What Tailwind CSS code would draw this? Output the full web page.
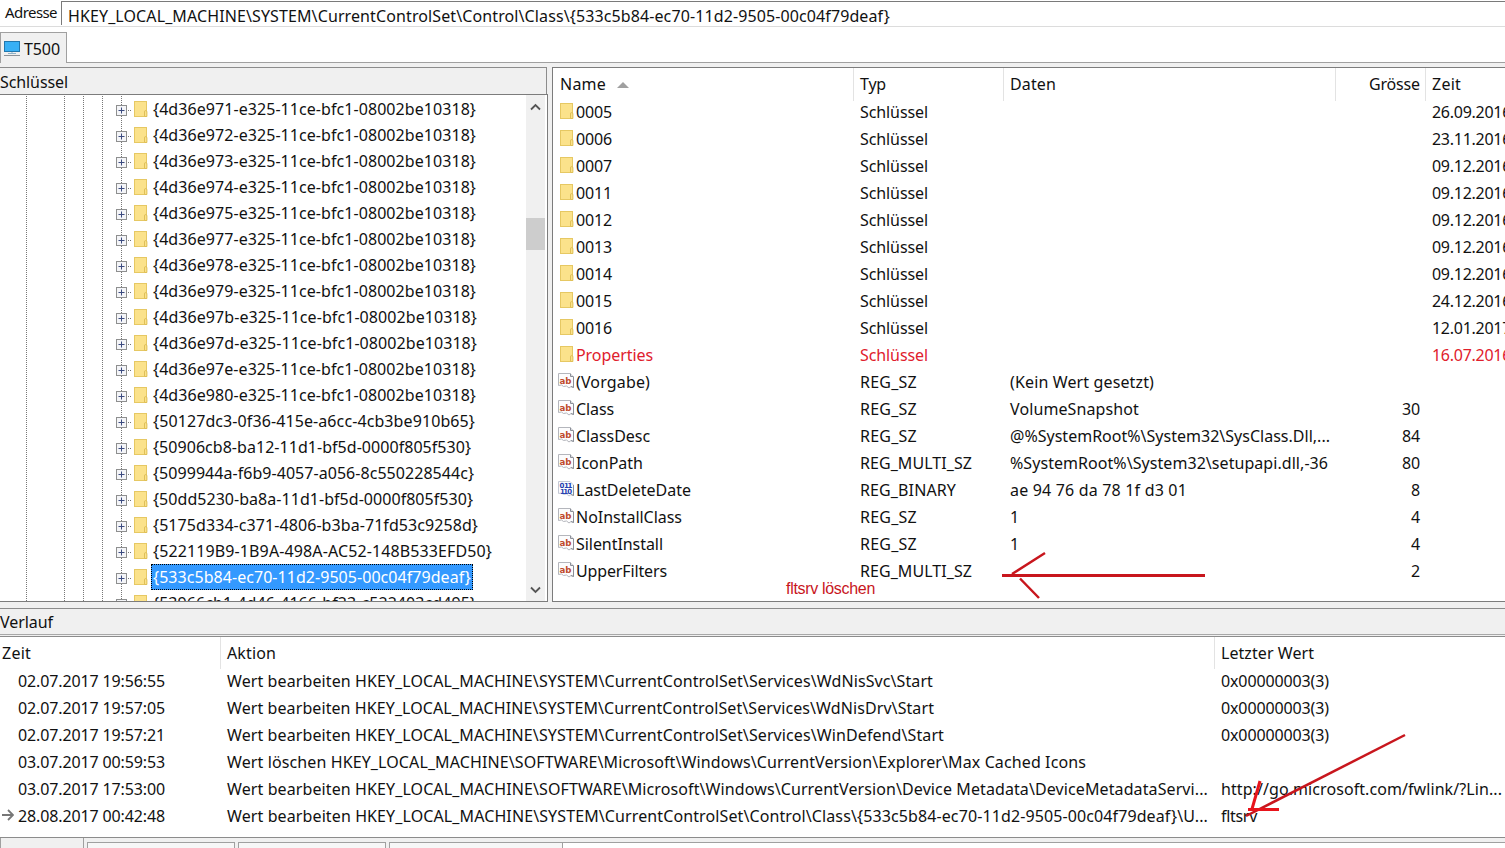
<!DOCTYPE html>
<html lang="de">
<head>
    <meta charset="UTF-8">
    <meta name="viewport" content="width=device-width, initial-scale=1.0">
    <title>Registry Editor</title>
    <script src="https://cdn.jsdelivr.net/npm/@tailwindcss/browser@4"></script>
</head>
<body class="relative flex h-[848px] w-[1505px] flex-col overflow-hidden bg-white font-['Noto_Sans',sans-serif] text-base leading-[26px] whitespace-nowrap text-[#111]">

    <!-- icons -->
    <svg class="hidden">
        <symbol id="folder" viewBox="0 0 14 18">
            <rect x="0.5" y="1.5" width="12" height="15" fill="#fbe28b" stroke="#e6c863"/>
            <path d="M10.5 16.5v-4.5q0-1.5 1.2-1.5t1.2 1.5v4.5z" fill="#fbe28b" stroke="#dfbf58"/>
        </symbol>
        <symbol id="string" viewBox="0 0 16 16">
            <path d="M0.5 0.5h11.500l3.500 3.500v10.500l-2.500-1-2 1.500-2.500-2-3 .500-2-1.500-3 .500z" fill="#fcfcfd" stroke="#b4b6bc"/>
            <path d="M12.500 0.500v3h3" fill="none" stroke="#8b8f98"/>
            <path d="M15.500 4v10.500l-2.500-1" fill="none" stroke="#8b8f98"/>
            <text x="1.500" y="11" textLength="12" lengthAdjust="spacingAndGlyphs" font-family="DejaVu Sans, sans-serif" font-size="9.500" font-weight="700" fill="#bf4a2c">ab</text>
        </symbol>
        <symbol id="binary" viewBox="0 0 16 16">
            <path d="M0.5 0.5h11.500l3.500 3.500v10.500l-2.500-1-2 1.500-2.500-2-3 .500-2-1.500-3 .500z" fill="#fcfcfd" stroke="#c4c8d4"/>
            <path d="M15.500 4v10.500l-2.500-1" fill="none" stroke="#8b8f98"/>
            <g font-family="DejaVu Sans, sans-serif" font-size="7" font-weight="700" fill="#2540b0">
                <text x="1.500" y="7.300">0</text>
                <text x="6" y="7.300">1</text>
                <text x="9.500" y="7.300">1</text>
                <text x="2" y="13.300">1</text>
                <text x="5.300" y="13.300">1</text>
                <text x="9.300" y="13.300">0</text>
            </g>
        </symbol>
    </svg>

    <!-- address bar -->
    <div class="flex h-[27px] shrink-0 border-b border-[#dcdcdc]">
        <div class="w-[61px] pl-[5px] text-[15px] leading-[25px]"><span data-w="52" data-size="15">Adresse</span></div>
        <div class="mt-px h-6 flex-1 border-t border-l border-[#7a7a7a] pt-px pl-1.5"><span data-w="822">HKEY_LOCAL_MACHINE\SYSTEM\CurrentControlSet\Control\Class\{533c5b84-ec70-11d2-9505-00c04f79deaf}</span></div>
    </div>

    <!-- computer tab -->
    <div class="flex h-9 shrink-0 pt-[5px]">
        <div class="flex w-[67px] items-center border-t border-r border-l border-[#a0a0a0] bg-[#f0f0f0] pl-[3px]">
            <svg class="mt-px mr-1 h-4 w-4" viewBox="0 0 16 16">
                <rect x="0.500" y="0.500" width="15" height="10" fill="#38b0f5" stroke="#2277ad"/>
                <path d="M8 11v1.500M4 12.500h8" stroke="#8fb2c8"/>
                <path d="M0 14.500h16" stroke="#8c9298"/>
            </svg>
            <span class="pt-0.5" data-w="36">T500</span>
        </div>
        <div class="flex-1 border-b border-[#a0a0a0]"></div>
    </div>

    <!-- tree + value list -->
    <div class="flex h-[546px] shrink-0 bg-[#f0f0f0] pt-1">
        <div class="flex w-[548px] flex-col">
            <div class="h-[27px] w-[547px] border-t border-r border-[#8c8c8c] pt-px"><span data-w="68">Schlüssel</span></div>
            <div class="flex h-[508px] border-t border-r border-b border-[#7c7c7c] bg-white">
                <div class="relative flex-1 overflow-hidden pt-px">
                    <svg class="absolute top-0 left-0 h-[506px] w-[130px]" fill="none" stroke="#777" stroke-dasharray="1 1">
                        <path d="M26.500 1v505M64.500 1v505M83.500 1v505M102.500 1v505M121.500 1v505"/>
                    </svg>
                    <div id="tree" class="relative"></div>
                </div>
                <div class="mr-[2px] flex w-[19px] flex-col bg-[#f0f0f0]">
                    <svg class="mt-2 ml-1 h-2 w-3" viewBox="0 0 12 8" fill="none" stroke="#555" stroke-width="1.800"><path d="M1 6.500l4.500-4.500 4.500 4.500"/></svg>
                    <div class="mt-[107px] h-8 w-[19px] bg-[#cdcdcd]"></div>
                    <svg class="mt-auto mb-[7px] ml-1 h-2 w-3" viewBox="0 0 12 8" fill="none" stroke="#555" stroke-width="1.800"><path d="M1 1.500l4.500 4.500 4.500-4.500"/></svg>
                </div>
            </div>
        </div>
        <div class="ml-1 h-[535px] flex-1 overflow-hidden border-t border-b border-l border-[#7c7c7c] bg-white">
            <div class="grid h-[31px] grid-cols-[301px_150px_332px_90px_200px] leading-[33px]">
                <div class="flex items-center border-r border-[#e3e3e3] pl-[7px]"><span data-w="46">Name</span>
                    <svg class="ml-[11px] h-1.5 w-3" viewBox="0 0 12 6"><path d="M0 6l6-6 6 6z" fill="#a0a0a0"/></svg>
                </div>
                <div class="border-r border-[#e3e3e3] pl-1.5"><span data-w="26">Typ</span></div>
                <div class="border-r border-[#e3e3e3] pl-1.5"><span data-w="46">Daten</span></div>
                <div class="border-r border-[#e3e3e3] pr-[5px] text-right"><span data-w="51">Grösse</span></div>
                <div class="pl-1.5"><span data-w="29">Zeit</span></div>
            </div>
            <div id="values"></div>
        </div>
    </div>

    <!-- history -->
    <div class="-mt-px h-[29px] shrink-0 border-t border-b border-[#8c8c8c] bg-[#f0f0f0]">
        <div class="h-[26px] border-b border-[#a8a8a8]"><span data-w="53">Verlauf</span></div>
    </div>
    <div class="h-[200px] shrink-0">
        <div class="grid h-[31px] grid-cols-[221px_994px_290px] leading-[32px]">
            <div class="border-r border-[#e3e3e3] pl-0.5"><span data-w="29">Zeit</span></div>
            <div class="border-r border-[#e3e3e3] pl-1.5"><span data-w="49">Aktion</span></div>
            <div class="pl-1.5"><span data-w="93">Letzter Wert</span></div>
        </div>
        <div id="history"></div>
    </div>

    <!-- bottom tabs -->
    <div class="flex h-[11px] shrink-0 border-t border-[#8c8c8c] bg-[#f0f0f0]">
        <div class="w-[84px] border-r border-l border-[#a0a0a0]"></div>
        <div class="mt-1 ml-[3px] w-[148px] border-t border-r border-l border-[#a0a0a0] bg-[#f7f7f7]"></div>
        <div class="mt-1 ml-[3px] w-[148px] border-t border-r border-l border-[#a0a0a0] bg-[#f7f7f7]"></div>
        <div class="mt-1 ml-[3px] w-[174px] border-t border-r border-l border-[#a0a0a0] bg-[#f7f7f7]"></div>
        <div class="mt-1 flex-1 border-t border-[#a0a0a0] bg-white"></div>
    </div>

    <!-- hand drawn annotations -->
    <svg class="absolute top-0 left-0 h-[848px] w-[1505px]" fill="none" stroke="#c8161d" stroke-width="2.500">
        <path d="M1002 575.500H1205" stroke-width="3"/>
        <path d="M1045 553L1012 574M1020 578.500L1039 598"/>
        <path d="M1405 735L1246 816"/>
        <path d="M1260 781L1252 809M1248 809.500H1279" stroke="#e8141c" stroke-width="3"/>
    </svg>
    <div class="absolute top-[577px] left-[786px] font-['Liberation_Sans',sans-serif] text-base text-[#c8161d]"><span data-w="89" data-font="Liberation Sans">fltsrv löschen</span></div>

    <script>
        // key name, text width
        const keys = [
            ['{4d36e971-e325-11ce-bfc1-08002be10318}', 323],
            ['{4d36e972-e325-11ce-bfc1-08002be10318}', 323],
            ['{4d36e973-e325-11ce-bfc1-08002be10318}', 323],
            ['{4d36e974-e325-11ce-bfc1-08002be10318}', 323],
            ['{4d36e975-e325-11ce-bfc1-08002be10318}', 323],
            ['{4d36e977-e325-11ce-bfc1-08002be10318}', 323],
            ['{4d36e978-e325-11ce-bfc1-08002be10318}', 323],
            ['{4d36e979-e325-11ce-bfc1-08002be10318}', 323],
            ['{4d36e97b-e325-11ce-bfc1-08002be10318}', 324],
            ['{4d36e97d-e325-11ce-bfc1-08002be10318}', 324],
            ['{4d36e97e-e325-11ce-bfc1-08002be10318}', 323],
            ['{4d36e980-e325-11ce-bfc1-08002be10318}', 323],
            ['{50127dc3-0f36-415e-a6cc-4cb3be910b65}', 322],
            ['{50906cb8-ba12-11d1-bf5d-0000f805f530}', 318],
            ['{5099944a-f6b9-4057-a056-8c550228544c}', 321],
            ['{50dd5230-ba8a-11d1-bf5d-0000f805f530}', 320],
            ['{5175d334-c371-4806-b3ba-71fd53c9258d}', 325],
            ['{522119B9-1B9A-498A-AC52-148B533EFD50}', 339],
            ['{533c5b84-ec70-11d2-9505-00c04f79deaf}', 318],
            ['{53966cb1-4d46-4166-bf23-c522403cd495}', 323]
        ];

        // icon, name, width, type, width, data, width, size, time
        const values = [
            ['folder', '0005', 36, 'Schlüssel', 68, '', 0, '', '26.09.2016'],
            ['folder', '0006', 36, 'Schlüssel', 68, '', 0, '', '23.11.2016'],
            ['folder', '0007', 36, 'Schlüssel', 68, '', 0, '', '09.12.2016'],
            ['folder', '0011', 36, 'Schlüssel', 68, '', 0, '', '09.12.2016'],
            ['folder', '0012', 36, 'Schlüssel', 68, '', 0, '', '09.12.2016'],
            ['folder', '0013', 36, 'Schlüssel', 68, '', 0, '', '09.12.2016'],
            ['folder', '0014', 36, 'Schlüssel', 68, '', 0, '', '09.12.2016'],
            ['folder', '0015', 36, 'Schlüssel', 68, '', 0, '', '24.12.2016'],
            ['folder', '0016', 36, 'Schlüssel', 68, '', 0, '', '12.01.2017'],
            ['folder', 'Properties', 77, 'Schlüssel', 68, '', 0, '', '16.07.2016'],
            ['string', '(Vorgabe)', 74, 'REG_SZ', 57, '(Kein Wert gesetzt)', 144, '', ''],
            ['string', 'Class', 38, 'REG_SZ', 57, 'VolumeSnapshot', 129, '30', ''],
            ['string', 'ClassDesc', 74, 'REG_SZ', 57, '@%SystemRoot%\\System32\\SysClass.Dll,...', 320, '84', ''],
            ['string', 'IconPath', 67, 'REG_MULTI_SZ', 112, '%SystemRoot%\\System32\\setupapi.dll,-36', 318, '80', ''],
            ['binary', 'LastDeleteDate', 115, 'REG_BINARY', 96, 'ae 94 76 da 78 1f d3 01', 177, '8', ''],
            ['string', 'NoInstallClass', 106, 'REG_SZ', 57, '1', 9, '4', ''],
            ['string', 'SilentInstall', 87, 'REG_SZ', 57, '1', 9, '4', ''],
            ['string', 'UpperFilters', 91, 'REG_MULTI_SZ', 112, '', 0, '2', '']
        ];

        // time, action, width, last value, width
        const history = [
            ['02.07.2017 19:56:55', 'Wert bearbeiten HKEY_LOCAL_MACHINE\\SYSTEM\\CurrentControlSet\\Services\\WdNisSvc\\Start', 706, '0x00000003(3)', 108],
            ['02.07.2017 19:57:05', 'Wert bearbeiten HKEY_LOCAL_MACHINE\\SYSTEM\\CurrentControlSet\\Services\\WdNisDrv\\Start', 707, '0x00000003(3)', 108],
            ['02.07.2017 19:57:21', 'Wert bearbeiten HKEY_LOCAL_MACHINE\\SYSTEM\\CurrentControlSet\\Services\\WinDefend\\Start', 717, '0x00000003(3)', 108],
            ['03.07.2017 00:59:53', 'Wert löschen HKEY_LOCAL_MACHINE\\SOFTWARE\\Microsoft\\Windows\\CurrentVersion\\Explorer\\Max Cached Icons', 859, '', 0],
            ['03.07.2017 17:53:00', 'Wert bearbeiten HKEY_LOCAL_MACHINE\\SOFTWARE\\Microsoft\\Windows\\CurrentVersion\\Device Metadata\\DeviceMetadataServi...', 981, 'http://go.microsoft.com/fwlink/?Lin...', 281],
            ['28.08.2017 00:42:48', 'Wert bearbeiten HKEY_LOCAL_MACHINE\\SYSTEM\\CurrentControlSet\\Control\\Class\\{533c5b84-ec70-11d2-9505-00c04f79deaf}\\U...', 981, 'fltsrv', 36]
        ];

        document.getElementById('tree').innerHTML = keys.map(([name, w], i) => `
            <div class="flex h-[26px] items-center pl-[116px]">
                <svg class="mt-0.5 mr-0.5 h-[11px] w-4" viewBox="0 0 16 11">
                    <rect x="0.500" y="0.500" width="10" height="10" fill="#f4f5f8" stroke="#8e8f8f"/>
                    <path d="M2.500 5.500h6M5.500 2.500v6" stroke="#3c4b80"/>
                    <path d="M12 5.500h1M14 5.500h1" stroke="#777"/>
                </svg>
                <svg class="h-[18px] w-[14px]"><use href="#folder"/></svg>
                <div class="${i === 18 ? 'ml-[3px] border border-dotted border-black bg-[#3399ff] pr-px pl-px text-white leading-6' : 'ml-[5px]'}"><span data-w="${w}">${name}</span></div>
            </div>`).join('');

        document.getElementById('values').innerHTML = values.map(([icon, name, nw, type, tw, data, dw, size, time]) => `
            <div class="grid h-[27px] grid-cols-[301px_150px_332px_90px_200px] leading-[27px] ${name === 'Properties' ? 'text-[#e0202c]' : ''}">
                <div class="flex">
                    <div class="w-[23px]">${icon === 'folder'
                        ? '<svg class="mt-[3px] ml-[7px] h-[18px] w-[14px]"><use href="#folder"/></svg>'
                        : `<svg class="mt-1 ml-[5px] h-4 w-4"><use href="#${icon}"/></svg>`}</div>
                    <span data-w="${nw}">${name}</span>
                </div>
                <div class="pl-1.5"><span data-w="${tw}">${type}</span></div>
                <div class="pl-1.5"><span data-w="${dw}">${data}</span></div>
                <div class="pr-1.5 text-right"><span data-w="${size.length * 9}">${size}</span></div>
                <div class="pl-1.5"><span data-w="79">${time}</span></div>
            </div>`).join('');

        document.getElementById('history').innerHTML = history.map(([time, action, aw, last, lw], i) => `
            <div class="grid h-[27px] grid-cols-[221px_994px_290px] leading-[27px]">
                <div class="flex">
                    <div class="w-[18px] pt-[6px] pl-0.5">${i === 5 ? '<svg class="h-3 w-3" viewBox="0 0 12 12" fill="none" stroke="#777" stroke-width="1.800"><path d="M0 6h11M6 1l5 5-5 5"/></svg>' : ''}</div>
                    <span data-w="147">${time}</span>
                </div>
                <div class="pl-1.5"><span data-w="${aw}">${action}</span></div>
                <div class="pl-1.5"><span data-w="${lw}">${last}</span></div>
            </div>`).join('');

        // spread every label to its given width
        const ctx = document.createElement('canvas').getContext('2d');
        document.querySelectorAll('[data-w]').forEach(el => {
            const n = el.textContent.length;
            if (!n) return;
            ctx.font = `${el.dataset.size || 16}px "${el.dataset.font || 'Noto Sans'}"`;
            const diff = el.dataset.w - ctx.measureText(el.textContent).width;
            el.style.letterSpacing = diff / n + 'px';
        });
    </script>
</body>
</html>
